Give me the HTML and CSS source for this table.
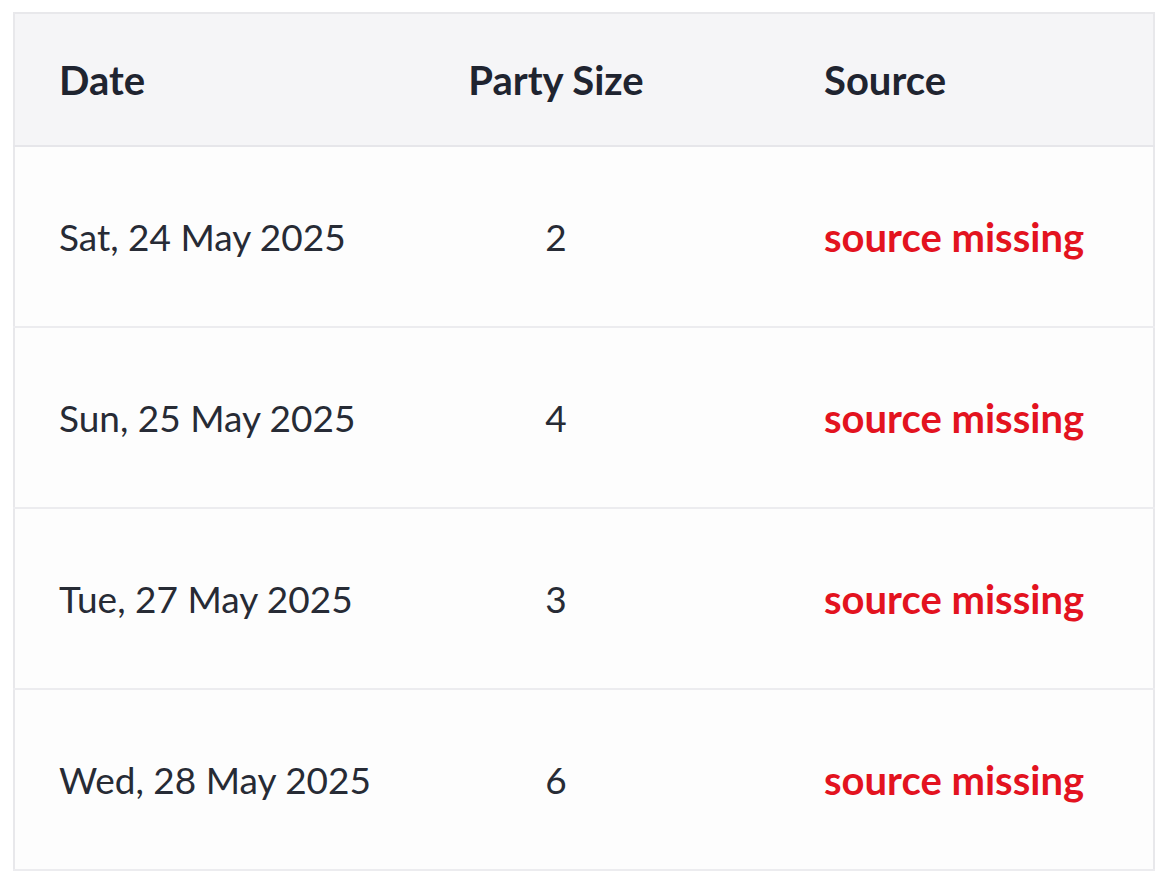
FILE: index.html
```html
<!DOCTYPE html>
<html lang="en">
<head>
    <meta charset="UTF-8">
    <meta name="viewport" content="width=device-width, initial-scale=1.0">
    <title>Reservations</title>
    <link rel="stylesheet" href="styles.css">
</head>
<body>
    <main>
        <table class="bookings">
            <thead>
                <tr>
                    <th class="col-date">Date</th>
                    <th class="col-size">Party Size</th>
                    <th class="col-source">Source</th>
                </tr>
            </thead>
            <tbody>
                <tr>
                    <td class="date">Sat, 24 May 2025</td>
                    <td class="size">2</td>
                    <td class="missing">source missing</td>
                </tr>
                <tr>
                    <td class="date">Sun, 25 May 2025</td>
                    <td class="size">4</td>
                    <td class="missing">source missing</td>
                </tr>
                <tr>
                    <td class="date">Tue, 27 May 2025</td>
                    <td class="size">3</td>
                    <td class="missing">source missing</td>
                </tr>
                <tr>
                    <td class="date">Wed, 28 May 2025</td>
                    <td class="size">6</td>
                    <td class="missing">source missing</td>
                </tr>
            </tbody>
        </table>
    </main>
</body>
</html>
```

FILE: styles.css
```css
body {
    font-family: Lato, "Noto Sans", sans-serif;
    margin: 0;
    padding: 0;
    background-color: #ffffff;
    color: #272b35;
}
main {
    padding: 12px 13px 0 13px;
}
.bookings {
    width: 1142px;
    border-collapse: collapse;
    border: 2px solid #e8e8eb;
    background-color: #fdfdfd;
    table-layout: fixed;
}
.bookings th {
    background-color: #f5f5f7;
    color: #1f2430;
    font-weight: bold;
    font-size: 40px;
    text-align: left;
    height: 131px;
    padding: 0 46px;
    border-bottom: 2px solid #e6e6ea;
    white-space: nowrap;
}
.bookings td {
    font-size: 37px;
    height: 179px;
    padding: 0 46px;
    border-bottom: 2px solid #ececef;
    white-space: nowrap;
}
.bookings th.col-date,
.bookings td.date {
    padding-left: 44px;
}
.col-date {
    width: 229px;
}
.col-size {
    width: 352px;
}
.bookings th.col-size,
.bookings td.size {
    text-align: center;
}
.bookings td.missing {
    color: #e3131f;
    font-weight: bold;
    font-size: 40px;
}
```
